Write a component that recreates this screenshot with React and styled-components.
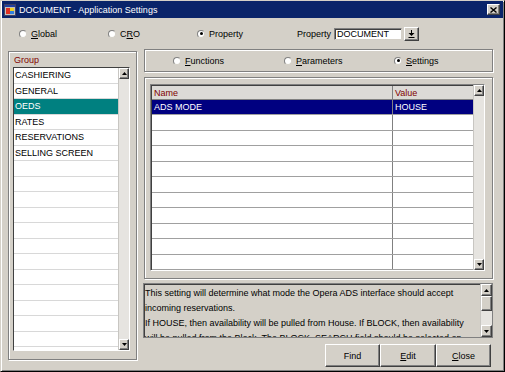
import React from 'react';
import styled, { createGlobalStyle, css } from 'styled-components';

const GlobalStyle = createGlobalStyle`
  html, body {
    margin: 0;
    padding: 0;
  }
  body {
    font-family: 'Liberation Sans', Arial, sans-serif;
    font-size: 9px;
    color: #000;
  }
  * {
    box-sizing: border-box;
  }
`;

const raised = css`
  background: #d4d0c8;
  border: 1px solid;
  border-color: #fff #404040 #404040 #fff;
  box-shadow: inset -1px -1px #808080;
`;

const etched = css`
  border: 1px solid #808080;
  box-shadow: inset 1px 1px #fff, 1px 1px #fff;
`;

const Window = styled.div`
  width: 505px;
  height: 372px;
  background: #d4d0c8;
  border: 1px solid;
  border-color: #d4d0c8 #000 #000 #d4d0c8;
  box-shadow: inset 1px 1px #fff, inset -1px -1px #808080;
  padding: 0 1px 2px 1px;
  display: flex;
  flex-direction: column;
`;

const TitleBar = styled.div`
  height: 17px;
  background: #0a246a;
  color: #fff;
  display: flex;
  align-items: center;
  padding: 0 3px 0 2px;
  flex-shrink: 0;
`;

const TitleText = styled.span`
  margin-left: 3px;
  flex: 1;
  font-size: 9px;
`;

const CloseButton = styled.div`
  ${raised};
  width: 13px;
  height: 11px;
  display: flex;
  align-items: center;
  justify-content: center;
`;

const ScopeRow = styled.div`
  height: 31px;
  display: flex;
  align-items: center;
  padding-left: 17px;
  flex-shrink: 0;
`;

const RadioItem = styled.label`
  display: flex;
  align-items: center;
  width: ${(p) => p.$width}px;
  flex-shrink: 0;
`;

const RadioCircle = styled.span`
  width: 8px;
  height: 8px;
  border-radius: 50%;
  background: #fff;
  border: 1px solid;
  border-color: #808080 #d4d0c8 #d4d0c8 #808080;
  margin-right: 4px;
  position: relative;
  flex-shrink: 0;

  &::after {
    content: '';
    display: ${(p) => (p.$checked ? 'block' : 'none')};
    position: absolute;
    left: 1.5px;
    top: 1.5px;
    width: 3px;
    height: 3px;
    border-radius: 50%;
    background: #000;
  }
`;

const Key = styled.span`
  text-decoration: underline;
`;

const FieldLabel = styled.span`
  margin-right: 3px;
`;

const TextBox = styled.div`
  width: 68px;
  height: 12px;
  background: #fff;
  border: 1px solid;
  border-color: #808080 #d4d0c8 #d4d0c8 #808080;
  box-shadow: inset 1px 1px #404040;
  padding-left: 2px;
  line-height: 10px;
`;

const DropButton = styled.div`
  ${raised};
  width: 15px;
  height: 14px;
  margin-left: 2px;
  display: flex;
  align-items: center;
  justify-content: center;
`;

const Content = styled.div`
  flex: 1;
  display: flex;
  gap: 7px;
  padding: 0 10px 0 6px;
  min-height: 0;
`;

const GroupPanel = styled.div`
  ${etched};
  width: 129px;
  height: 309px;
  margin-top: 2px;
  padding: 3px 6px 8px 4px;
  display: flex;
  flex-direction: column;
`;

const HeadLabel = styled.div`
  color: #800000;
  line-height: 11px;
  height: 11px;
  padding-left: ${(p) => p.$indent || 0}px;
  margin-bottom: 1px;
`;

const ListBox = styled.div`
  flex: 1;
  display: flex;
  border: 1px solid;
  border-color: #404040 #fff #fff #404040;
  background: #fff;
  min-height: 0;
`;

const ListRows = styled.div`
  flex: 1;
  overflow: hidden;
`;

const ListRow = styled.div`
  height: 15.5px;
  line-height: 15px;
  padding-left: 1px;
  border-bottom: 1px solid #d8d8d8;
  white-space: nowrap;
  background: ${(p) => (p.$selected ? '#008080' : '#fff')};
  color: ${(p) => (p.$selected ? '#fff' : '#000')};
`;

const ScrollBar = styled.div`
  width: ${(p) => p.$width}px;
  flex-shrink: 0;
  display: flex;
  flex-direction: column;
  background: #e6e4e0;
  border-left: 1px solid #c8c6c2;
`;

const ScrollButton = styled.div`
  ${raised};
  height: ${(p) => p.$height}px;
  flex-shrink: 0;
  display: flex;
  align-items: center;
  justify-content: center;
`;

const ScrollThumb = styled.div`
  ${raised};
  height: ${(p) => p.$height}px;
  flex-shrink: 0;
`;

const ScrollFill = styled.div`
  flex: 1;
`;

const RightColumn = styled.div`
  width: 349px;
  display: flex;
  flex-direction: column;
`;

const ModePanel = styled.div`
  ${etched};
  height: 23px;
  display: flex;
  align-items: center;
  padding-left: 28px;
  flex-shrink: 0;
`;

const TableFrame = styled.div`
  ${etched};
  height: 202px;
  margin-top: 5px;
  padding: 6px 7px 7px 5px;
  display: flex;
  flex-shrink: 0;
`;

const Table = styled.div`
  flex: 1;
  display: flex;
  border: 1px solid;
  border-color: #808080 #fff #fff #808080;
`;

const Grid = styled.div`
  flex: 1;
  display: flex;
  flex-direction: column;
  background: #fff;
  border-top: 1px solid #404040;
  border-left: 1px solid #404040;
`;

const Row = styled.div`
  display: grid;
  grid-template-columns: 240px 1fr;
  flex: ${(p) => (p.$header ? '0 0 14px' : '1')};
  background: ${(p) => (p.$header ? '#dcdad6' : p.$selected ? '#000080' : '#fff')};
  color: ${(p) => (p.$header ? '#800000' : p.$selected ? '#fff' : '#000')};
  border-bottom: 1px solid ${(p) => (p.$header ? '#808080' : '#a0a0a0')};
`;

const Cell = styled.div`
  padding-left: 2px;
  display: flex;
  align-items: center;
  white-space: nowrap;
  & + & {
    border-left: 1px solid #808080;
  }
`;

const DescBox = styled.div`
  height: 55px;
  margin-top: 4px;
  margin-left: -1px;
  display: flex;
  border: 1px solid #808080;
  box-shadow: inset 1px 1px #404040;
  flex-shrink: 0;
`;

const DescText = styled.div`
  flex: 1;
  overflow: hidden;
  padding: 2px 0 0 1px;
  line-height: 15px;
  white-space: nowrap;
`;

const ButtonRow = styled.div`
  margin-top: 6px;
  display: flex;
  justify-content: flex-end;
  padding-right: 2px;
`;

const PushButton = styled.div`
  ${raised};
  width: ${(p) => p.$width}px;
  height: 23px;
  display: flex;
  align-items: center;
  justify-content: center;
`;

const Arrow = ({ down }) => (
  <svg width="5" height="3" viewBox="0 0 5 3">
    <polygon points={down ? '0,0 5,0 2.5,3' : '0,3 5,3 2.5,0'} fill="#000" />
  </svg>
);

const Scroller = ({ width, button, thumb }) => (
  <ScrollBar $width={width}>
    <ScrollButton $height={button}>
      <Arrow />
    </ScrollButton>
    {thumb && <ScrollThumb $height={thumb} />}
    <ScrollFill />
    <ScrollButton $height={button}>
      <Arrow down />
    </ScrollButton>
  </ScrollBar>
);

const Radio = ({ width, checked, children }) => (
  <RadioItem $width={width}>
    <RadioCircle $checked={checked} />
    <span>{children}</span>
  </RadioItem>
);

const AppIcon = () => (
  <svg width="12" height="12" viewBox="0 0 12 12">
    <rect x="0.5" y="0.5" width="11" height="11" fill="#c0c0c0" stroke="#404060" />
    <rect x="1" y="1" width="10" height="2" fill="#2040a0" />
    <rect x="2" y="4" width="4" height="6" fill="#e03020" />
    <rect x="6" y="4" width="4" height="3" fill="#f0d020" />
    <rect x="6" y="7" width="4" height="3" fill="#3080e0" />
  </svg>
);

const groups = ['CASHIERING', 'GENERAL', 'OEDS', 'RATES', 'RESERVATIONS', 'SELLING SCREEN'];

const descLines = [
  'This setting will determine what mode the Opera ADS interface should accept',
  'incoming reservations.',
  'If HOUSE, then availability will be pulled from House. If BLOCK, then availability',
  'will be pulled from the Block. The BLOCK_SEARCH field should be selected on',
];

export default function App() {
  const listRows = Array.from({ length: 19 }, (_, i) => groups[i] || '');
  const tableRows = Array.from({ length: 11 }, (_, i) => i);

  return (
    <>
      <GlobalStyle />
      <Window>
        <TitleBar>
          <AppIcon />
          <TitleText>DOCUMENT - Application Settings</TitleText>
          <CloseButton>
            <svg width="7" height="6" viewBox="0 0 7 6">
              <path d="M0.5 0.5 L6.5 5.5 M6.5 0.5 L0.5 5.5" stroke="#000" strokeWidth="1.4" />
            </svg>
          </CloseButton>
        </TitleBar>

        <ScopeRow>
          <Radio width={89}>
            <Key>G</Key>lobal
          </Radio>
          <Radio width={89}>
            C<Key>R</Key>O
          </Radio>
          <Radio width={100} checked>
            Property
          </Radio>
          <FieldLabel>Property</FieldLabel>
          <TextBox>DOCUMENT</TextBox>
          <DropButton>
            <svg width="7" height="8" viewBox="0 0 7 8">
              <rect x="3" y="0" width="1" height="3" fill="#000" />
              <polygon points="0.5,3 6.5,3 3.5,6" fill="#000" />
              <rect x="0.5" y="7" width="6" height="1" fill="#000" />
            </svg>
          </DropButton>
        </ScopeRow>

        <Content>
          <GroupPanel>
            <HeadLabel $indent={1}>Group</HeadLabel>
            <ListBox>
              <ListRows>
                {listRows.map((g, i) => (
                  <ListRow key={i} $selected={g === 'OEDS'}>
                    {g}
                  </ListRow>
                ))}
              </ListRows>
              <Scroller width={11} button={11} />
            </ListBox>
          </GroupPanel>

          <RightColumn>
            <ModePanel>
              <Radio width={111}>
                <Key>F</Key>unctions
              </Radio>
              <Radio width={110}>
                <Key>P</Key>arameters
              </Radio>
              <Radio width={80} checked>
                <Key>S</Key>ettings
              </Radio>
            </ModePanel>

            <TableFrame>
              <Table>
                <Grid>
                  <Row $header>
                    <Cell>Name</Cell>
                    <Cell>Value</Cell>
                  </Row>
                  {tableRows.map((i) => (
                    <Row key={i} $selected={i === 0}>
                      <Cell>{i === 0 ? 'ADS MODE' : ''}</Cell>
                      <Cell>{i === 0 ? 'HOUSE' : ''}</Cell>
                    </Row>
                  ))}
                </Grid>
                <Scroller width={11} button={11} />
              </Table>
            </TableFrame>

            <DescBox>
              <DescText>
                {descLines.map((l, i) => (
                  <div key={i}>{l}</div>
                ))}
              </DescText>
              <Scroller width={12} button={12} thumb={15} />
            </DescBox>

            <ButtonRow>
              <PushButton $width={55}>Find</PushButton>
              <PushButton $width={56}>
                <Key>E</Key>dit
              </PushButton>
              <PushButton $width={55}>
                <Key>C</Key>lose
              </PushButton>
            </ButtonRow>
          </RightColumn>
        </Content>
      </Window>
    </>
  );
}
